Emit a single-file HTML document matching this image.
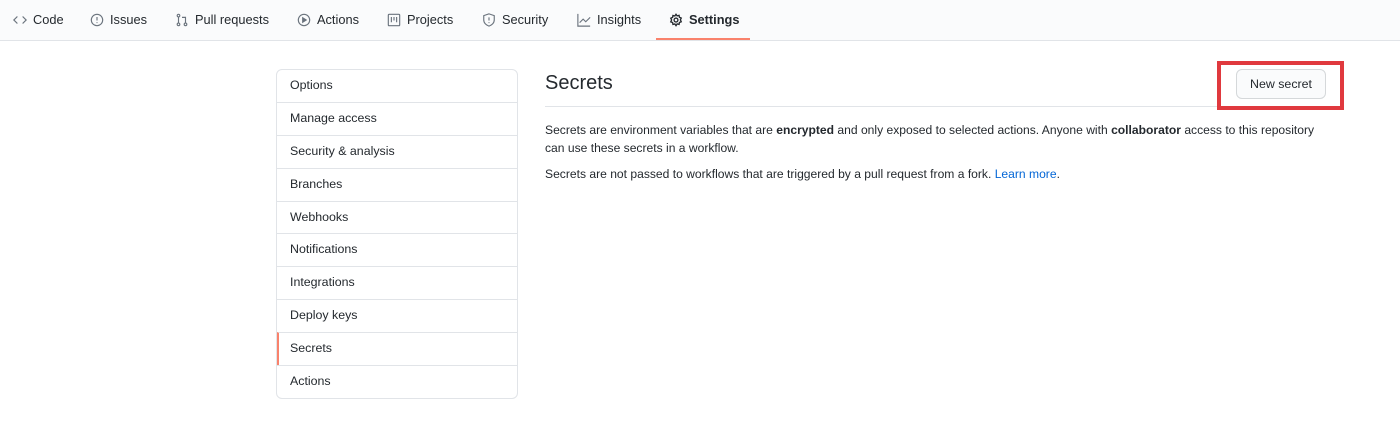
<!DOCTYPE html>
<html><head><style>
body{margin:0;width:1400px;height:423px;background:#fff;font-family:"Liberation Sans",sans-serif;color:#24292e;font-size:13px;position:relative;overflow:hidden}
.hd{position:absolute;left:0;top:0;width:1400px;height:40px;background:#fafbfc;border-bottom:1px solid #e1e4e8}
.tab{position:absolute;top:12px;font-size:12.8px;color:#24292e;display:flex;align-items:center}
.tab svg{margin-right:6px}
.ul{position:absolute;left:656px;top:38px;width:94px;height:2px;background:#f9826c}
.side{position:absolute;left:276px;top:69px;width:240px;border:1px solid #e1e4e8;border-radius:6px}
.side div{height:31.9px;line-height:30px;padding-left:13px;border-top:1px solid #e1e4e8;font-size:12.4px}
.side div:first-child{border-top:none}
.side .act{border-left:2px solid #f9826c;padding-left:11px}
h2{position:absolute;left:545px;top:72px;margin:0;font-size:20px;font-weight:normal}
.line{position:absolute;left:545px;top:106px;width:795px;height:1px;background:#e1e4e8}
.btn{position:absolute;left:1236px;top:69px;width:88px;height:28px;border:1px solid #d5d8da;border-radius:6px;background:#fafbfc;text-align:center;line-height:28px;font-size:12.4px}
.box{position:absolute;left:1217px;top:61px;width:119px;height:41px;border:4px solid #e0393e}
p{position:absolute;left:545px;margin:0;font-size:12.1px;line-height:18px;width:775px}
a{color:#0366d6;text-decoration:none}
</style></head><body>
<div class="hd"></div>
<div class="tab" style="left:13px"><svg width="14" height="14" viewBox="0 0 16 16" fill="none" stroke="#6a737d" stroke-width="1.4"><path d="M5 4L1 8l4 4M11 4l4 4-4 4"/></svg>Code</div>
<div class="tab" style="left:90px"><svg width="14" height="14" viewBox="0 0 16 16" fill="none" stroke="#6a737d" stroke-width="1.3"><circle cx="8" cy="8" r="6.5"/><path d="M8 4.5v4M8 10.5v1"/></svg>Issues</div>
<div class="tab" style="left:175px"><svg width="14" height="14" viewBox="0 0 16 16" fill="none" stroke="#6a737d" stroke-width="1.3"><circle cx="4" cy="3" r="1.5"/><circle cx="4" cy="13" r="1.5"/><circle cx="12" cy="13" r="1.5"/><path d="M4 4.5v7M12 11.5V5H8"/></svg>Pull requests</div>
<div class="tab" style="left:297px"><svg width="14" height="14" viewBox="0 0 16 16" fill="none" stroke="#6a737d" stroke-width="1.3"><circle cx="8" cy="8" r="6.5"/><path d="M6.5 5.5v5l4-2.5z" fill="#6a737d"/></svg>Actions</div>
<div class="tab" style="left:387px"><svg width="14" height="14" viewBox="0 0 16 16" fill="none" stroke="#6a737d" stroke-width="1.3"><rect x="1.5" y="1.5" width="13" height="13" rx="1"/><path d="M5 4.5v6M8 4.5v4M11 4.5v6"/></svg>Projects</div>
<div class="tab" style="left:482px"><svg width="14" height="14" viewBox="0 0 16 16" fill="none" stroke="#6a737d" stroke-width="1.3"><path d="M8 1l6 2v5c0 3.5-3 6-6 7-3-1-6-3.5-6-7V3z"/><path d="M8 5v3.5M8 10.5v1"/></svg>Security</div>
<div class="tab" style="left:577px"><svg width="14" height="14" viewBox="0 0 16 16" fill="none" stroke="#6a737d" stroke-width="1.3"><path d="M1 1v14h14M3 11l4-4 3 3 5-5"/></svg>Insights</div>
<div class="tab" style="left:669px;font-weight:bold"><svg width="14" height="14" viewBox="0 0 16 16" fill="none" stroke="#24292e" stroke-width="1.5"><circle cx="8" cy="8" r="2.2"/><path d="M8 1.5l1.3 1.8 2.2-.6.4 2.2 2.1.9-1 2 1 2.2-2.1.8-.4 2.2-2.2-.6L8 14.5l-1.3-2-2.2.6-.4-2.2-2.1-.8 1-2.2-1-2 2.1-.9.4-2.2 2.2.6z"/></svg>Settings</div>
<div class="ul"></div>
<div class="side">
<div>Options</div><div>Manage access</div><div>Security &amp; analysis</div><div>Branches</div><div>Webhooks</div><div>Notifications</div><div>Integrations</div><div>Deploy keys</div><div class="act">Secrets</div><div>Actions</div>
</div>
<h2>Secrets</h2>
<div class="line"></div>
<div class="btn">New secret</div>
<div class="box"></div>
<p style="top:121px">Secrets are environment variables that are <b>encrypted</b> and only exposed to selected actions. Anyone with <b>collaborator</b> access to this repository can use these secrets in a workflow.</p>
<p style="top:165px">Secrets are not passed to workflows that are triggered by a pull request from a fork. <a>Learn more</a>.</p>
</body></html>
